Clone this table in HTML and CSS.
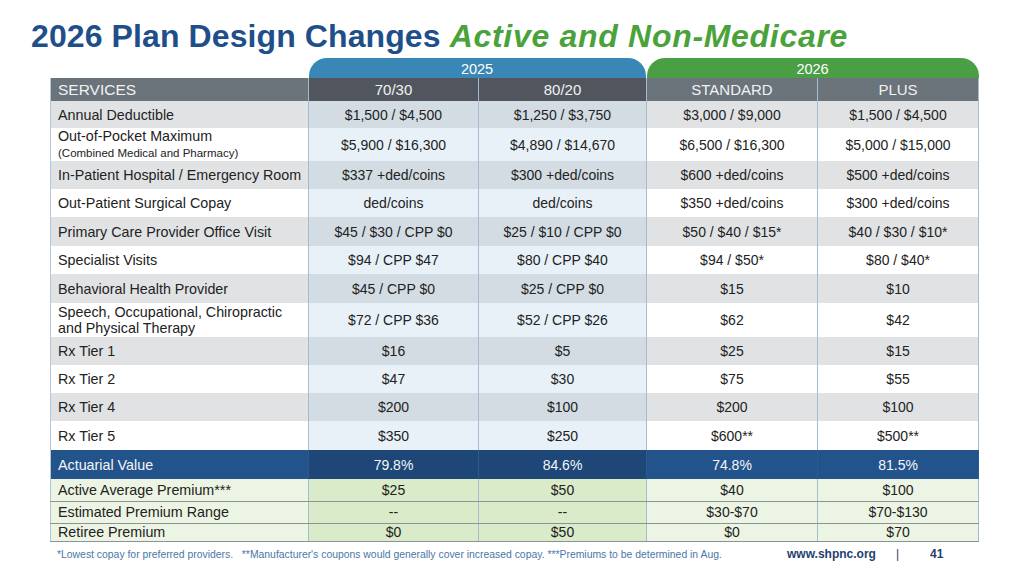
FILE: index.html
```html
<!DOCTYPE html>
<html>
<head>
<meta charset="utf-8">
<link rel="stylesheet" href="styles.css">
</head>
<body>
<div class="slide">
  <h1 class="title">2026 Plan Design Changes <em>Active and Non-Medicare</em></h1>
  <table class="plan">
    <colgroup>
      <col class="c-svc"><col class="c-a"><col class="c-b"><col class="c-c"><col class="c-d">
    </colgroup>
    <tr class="tabs">
      <td class="blank"></td>
      <td colspan="2"><div class="tab t2025">2025</div></td>
      <td colspan="2"><div class="tab t2026">2026</div></td>
    </tr>
    <tr class="head">
      <th class="lbl">SERVICES</th><th class="y25">70/30</th><th class="y25">80/20</th><th>STANDARD</th><th>PLUS</th>
    </tr>
    <tr class="g h27"><td class="lbl">Annual Deductible</td><td class="y25">$1,500 / $4,500</td><td class="y25">$1,250 / $3,750</td><td>$3,000 / $9,000</td><td>$1,500 / $4,500</td></tr>
    <tr class="w h32"><td class="lbl">Out-of-Pocket Maximum<br><span class="sub">(Combined Medical and Pharmacy)</span></td><td class="y25">$5,900 / $16,300</td><td class="y25">$4,890 / $14,670</td><td>$6,500 / $16,300</td><td>$5,000 / $15,000</td></tr>
    <tr class="g h28"><td class="lbl">In-Patient Hospital / Emergency Room</td><td class="y25">$337 +ded/coins</td><td class="y25">$300 +ded/coins</td><td>$600 +ded/coins</td><td>$500 +ded/coins</td></tr>
    <tr class="w h28"><td class="lbl">Out-Patient Surgical Copay</td><td class="y25">ded/coins</td><td class="y25">ded/coins</td><td>$350 +ded/coins</td><td>$300 +ded/coins</td></tr>
    <tr class="g h29"><td class="lbl">Primary Care Provider Office Visit</td><td class="y25">$45 / $30 / CPP $0</td><td class="y25">$25 / $10 / CPP $0</td><td>$50 / $40 / $15*</td><td>$40 / $30 / $10*</td></tr>
    <tr class="w h28"><td class="lbl">Specialist Visits</td><td class="y25">$94 / CPP $47</td><td class="y25">$80 / CPP $40</td><td>$94 / $50*</td><td>$80 / $40*</td></tr>
    <tr class="g h29"><td class="lbl">Behavioral Health Provider</td><td class="y25">$45 / CPP $0</td><td class="y25">$25 / CPP $0</td><td>$15</td><td>$10</td></tr>
    <tr class="w h34"><td class="lbl">Speech, Occupational, Chiropractic<br>and Physical Therapy</td><td class="y25">$72 / CPP $36</td><td class="y25">$52 / CPP $26</td><td>$62</td><td>$42</td></tr>
    <tr class="g h28"><td class="lbl">Rx Tier 1</td><td class="y25">$16</td><td class="y25">$5</td><td>$25</td><td>$15</td></tr>
    <tr class="w h28"><td class="lbl">Rx Tier 2</td><td class="y25">$47</td><td class="y25">$30</td><td>$75</td><td>$55</td></tr>
    <tr class="g h28"><td class="lbl">Rx Tier 4</td><td class="y25">$200</td><td class="y25">$100</td><td>$200</td><td>$100</td></tr>
    <tr class="w h29"><td class="lbl">Rx Tier 5</td><td class="y25">$350</td><td class="y25">$250</td><td>$600**</td><td>$500**</td></tr>
    <tr class="av h29"><td class="lbl">Actuarial Value</td><td class="y25">79.8%</td><td class="y25">84.6%</td><td>74.8%</td><td>81.5%</td></tr>
    <tr class="pr h22"><td class="lbl">Active Average Premium***</td><td class="y25">$25</td><td class="y25">$50</td><td>$40</td><td>$100</td></tr>
    <tr class="pr h22"><td class="lbl">Estimated Premium Range</td><td class="y25">--</td><td class="y25">--</td><td>$30-$70</td><td>$70-$130</td></tr>
    <tr class="pr h18"><td class="lbl">Retiree Premium</td><td class="y25">$0</td><td class="y25">$50</td><td>$0</td><td>$70</td></tr>
  </table>
  <div class="footer">
    <p class="note">*Lowest copay for preferred providers.&nbsp;&nbsp; **Manufacturer's coupons would generally cover increased copay. ***Premiums to be determined in Aug.</p>
    <span class="site">www.shpnc.org</span>
    <span class="sep">|</span>
    <span class="page">41</span>
  </div>
</div>
</body>
</html>
```
FILE: styles.css
```css
html, body {
  margin: 0;
  padding: 0;
  background: #ffffff;
}
.slide {
  width: 1024px;
  height: 576px;
  overflow: hidden;
  font-family: "Liberation Sans", Arial, sans-serif;
}
.title {
  margin: 0;
  padding: 16px 0 0 31px;
  height: 42px;
  font-size: 32px;
  line-height: 40px;
  font-weight: bold;
  color: #1f4f8b;
  white-space: nowrap;
  letter-spacing: 0.1px;
}
.title em {
  color: #4aa23a;
  font-style: italic;
  letter-spacing: 0.7px;
}
.plan {
  margin-left: 50px;
  width: 928px;
  border-collapse: collapse;
  table-layout: fixed;
  font-size: 14px;
  color: #222;
}
.c-svc { width: 258px; }
.c-a { width: 170px; }
.c-b { width: 168px; }
.c-c { width: 171px; }
.c-d { width: 161px; }
.plan td, .plan th {
  padding: 0;
  text-align: center;
  vertical-align: middle;
  font-weight: normal;
  border-left: 1px solid #a7bbd0;
  border-right: 1px solid #a7bbd0;
}
.plan .lbl {
  text-align: left;
  padding-left: 7px;
  border-left: 1px solid #b7c6d6;
  line-height: 16px;
  font-size: 14.3px;
}
.tabs td {
  border: none;
  height: 20px;
  vertical-align: bottom;
}
.tabs td.blank { border: none; }
.tab {
  height: 20px;
  line-height: 22px;
  border-radius: 18px 18px 0 0;
  color: #ffffff;
  font-size: 14.5px;
  text-align: center;
}
.t2025 { background: #3887b6; margin-right: 1px; }
.t2026 { background: #4a9f45; }
.head { height: 23px; }
.head th {
  background: #6b737b;
  color: #f2f2f2;
  font-size: 15px;
  border-top: none;
}
.head th.y25 { background: #51565e; }
.head th.lbl { font-size: 15.5px; }
.g td { background: #e1e2e4; }
.g td.y25 { background: #d3dce3; }
.w td { background: #ffffff; }
.w td.y25 { background: #e8f1f8; }
.plan .sub { font-size: 11.5px; }
.av td {
  background: #23538b;
  color: #f3f6fa;
  border-color: #2a5a90;
}
.av td.y25 { background: #1e4677; }
.pr td {
  background: #ecf4e4;
  border-bottom: 1px solid #8d9296;
  line-height: 16px;
}
.pr td.y25 { background: #d9ebc8; }
.h18 { height: 18px; }
.h22 { height: 22px; }
.h27 { height: 27px; }
.h28 { height: 28px; }
.h29 { height: 29px; }
.h32 { height: 32px; }
.h34 { height: 34px; }
.footer {
  display: flex;
  align-items: baseline;
  padding: 5px 0 0 57px;
  white-space: nowrap;
}
.note {
  margin: 0;
  font-size: 10.4px;
  color: #4a77a6;
  width: 730px;
}
.site {
  font-size: 12px;
  font-weight: bold;
  color: #1f3f6e;
}
.sep {
  font-size: 12px;
  color: #1f3f6e;
  margin-left: 20px;
}
.page {
  font-size: 12px;
  font-weight: bold;
  color: #1f3f6e;
  margin-left: 31px;
}
```
